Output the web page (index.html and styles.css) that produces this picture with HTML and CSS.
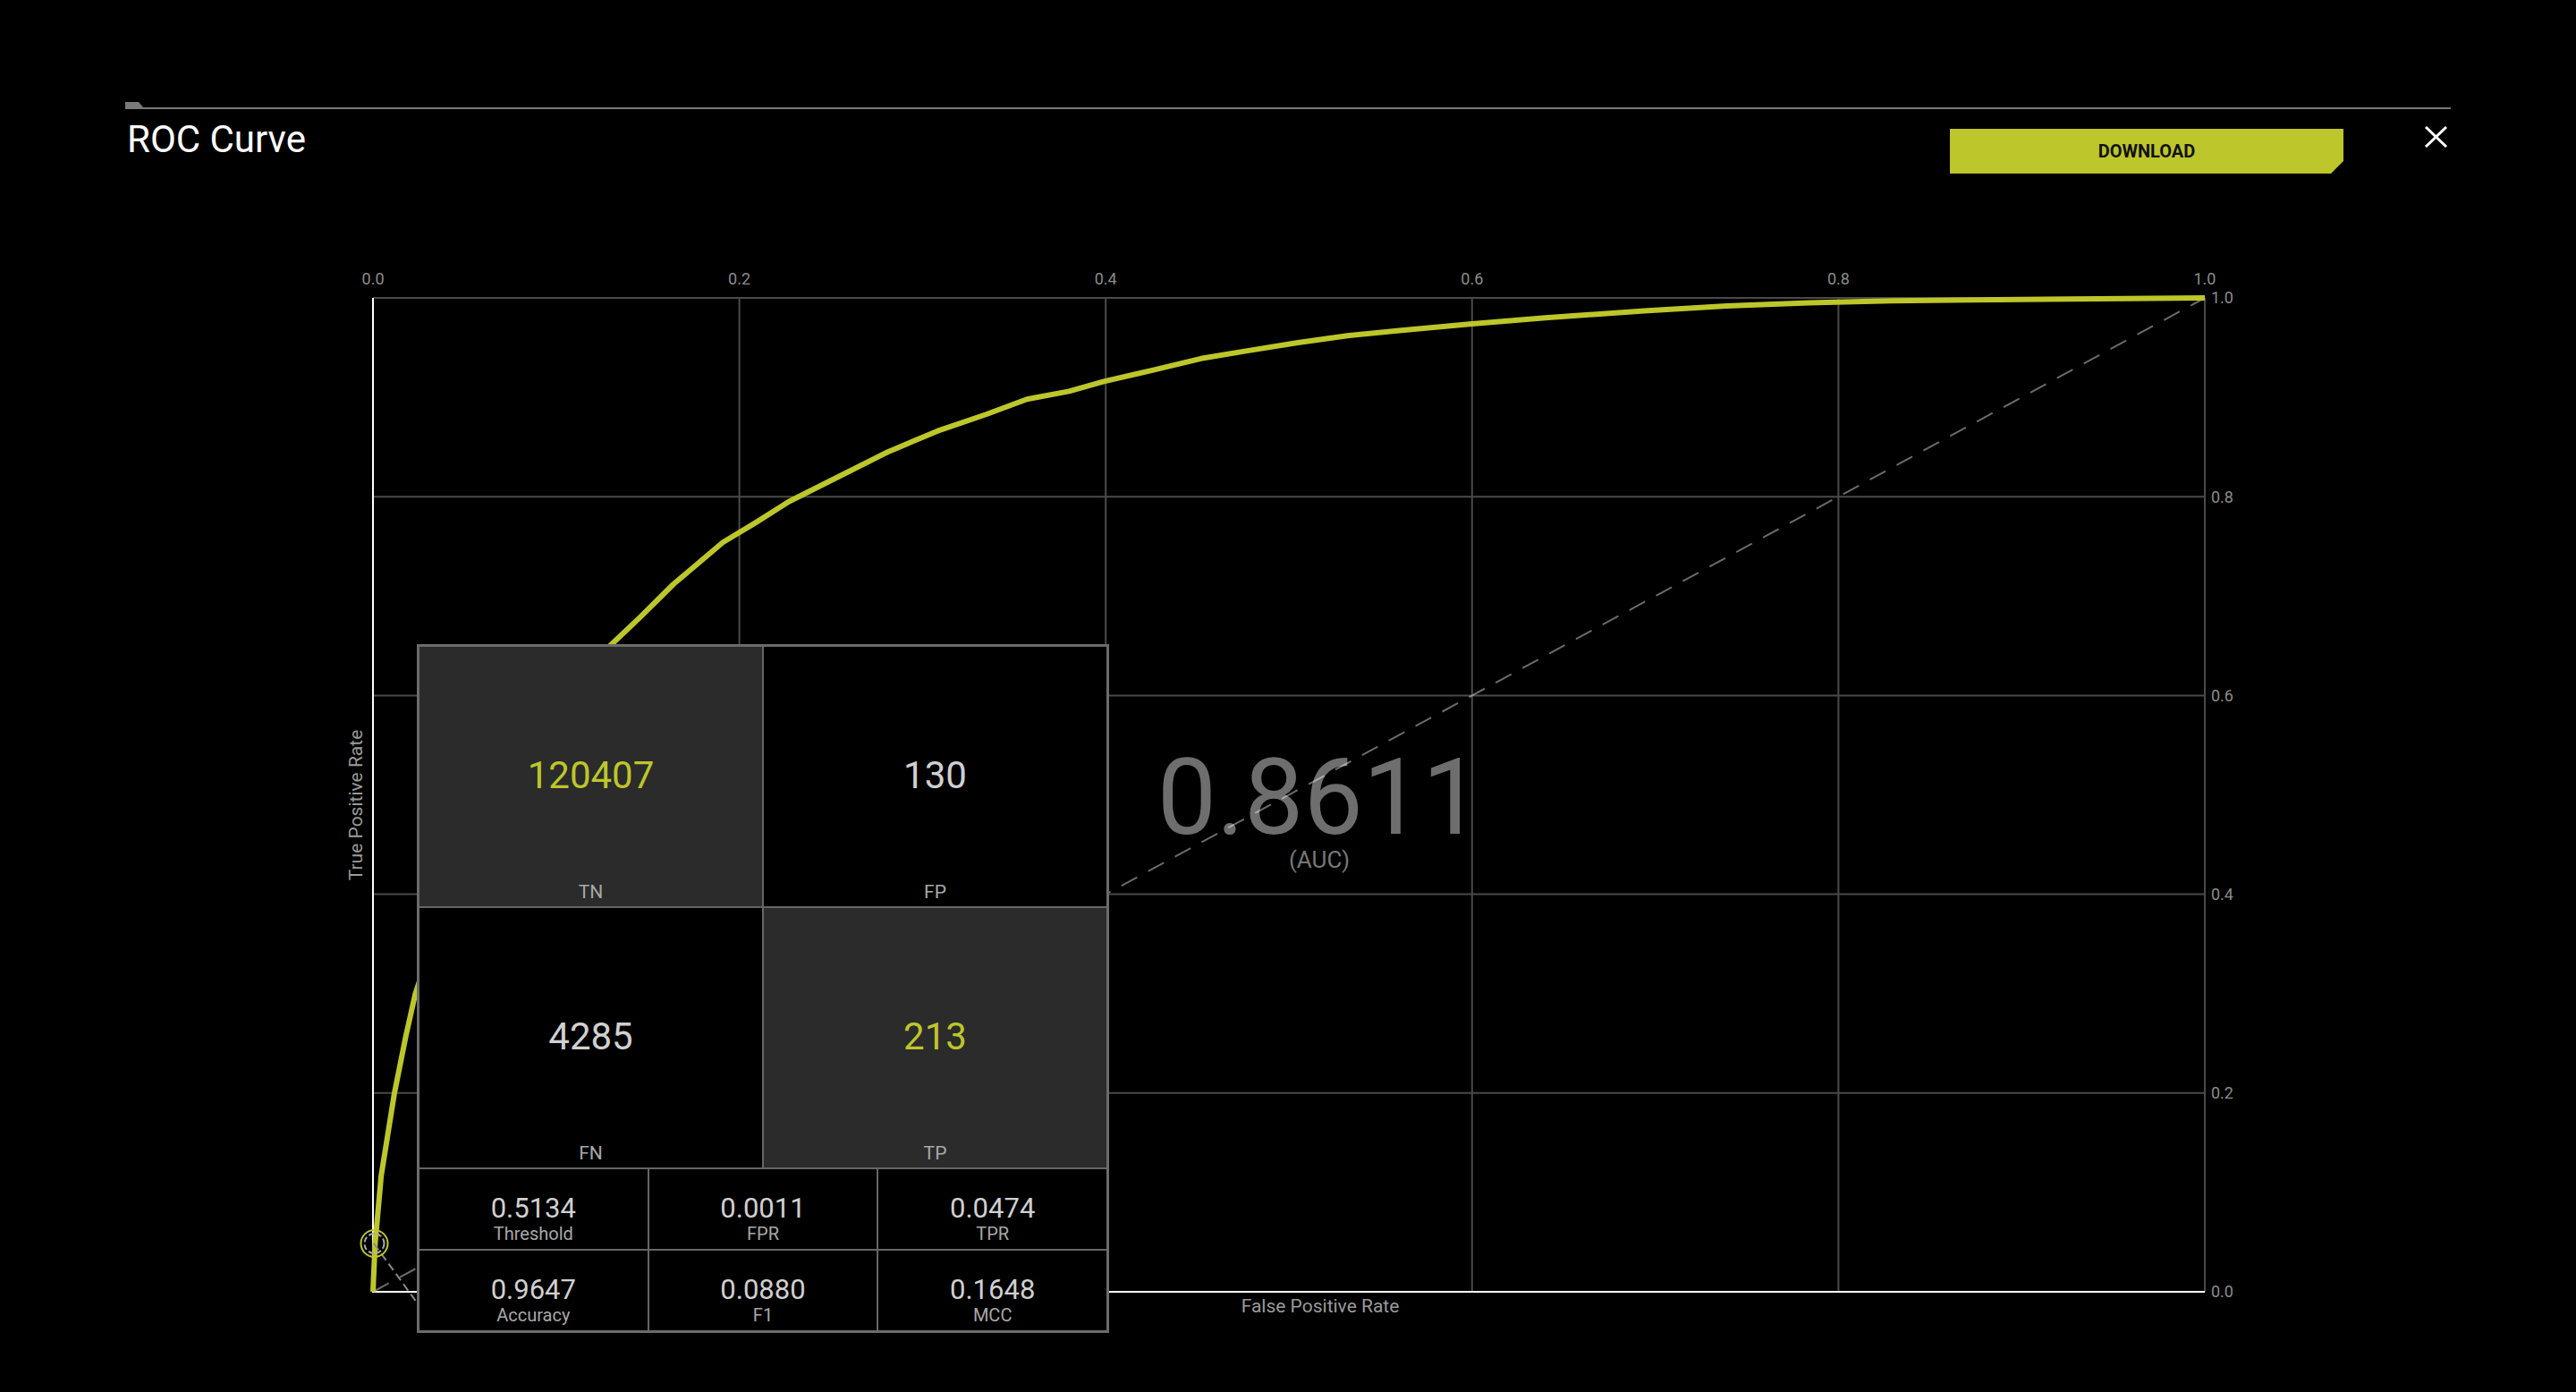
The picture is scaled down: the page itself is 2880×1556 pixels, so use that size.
FILE: index.html
```html
<!DOCTYPE html>
<html>
<head>
  <title>ROC Curve</title>
  <link rel="stylesheet" href="styles.css">
</head>
<body>
  <div class="modal">
    <div class="modal-bar"></div>
    <div class="modal-header">
      <h1 class="title">ROC Curve</h1>
      <div class="actions">
        <button class="download-btn">DOWNLOAD</button>
        <button class="close-btn" aria-label="Close">
          <svg width="27" height="24" viewBox="0 0 27 24">
            <line x1="2" y1="1" x2="25" y2="23" />
            <line x1="25" y1="1" x2="2" y2="23" />
          </svg>
        </button>
      </div>
    </div>

    <div class="chart">
      <svg class="chart-svg" width="2200" height="1220" viewBox="0 0 2200 1220">
        <g transform="translate(57,53)">
          <!-- grid -->
          <g class="grid">
            <line x1="0" y1="0" x2="2048" y2="0" />
            <line x1="0" y1="222.2" x2="2048" y2="222.2" />
            <line x1="0" y1="444.4" x2="2048" y2="444.4" />
            <line x1="0" y1="666.6" x2="2048" y2="666.6" />
            <line x1="0" y1="888.8" x2="2048" y2="888.8" />
            <line x1="409.6" y1="0" x2="409.6" y2="1111" />
            <line x1="819.2" y1="0" x2="819.2" y2="1111" />
            <line x1="1228.8" y1="0" x2="1228.8" y2="1111" />
            <line x1="1638.4" y1="0" x2="1638.4" y2="1111" />
            <line x1="2048" y1="0" x2="2048" y2="1111" />
          </g>

          <!-- ticks -->
          <g class="tick tick-x">
            <text x="0" y="-15">0.0</text>
            <text x="409.6" y="-15">0.2</text>
            <text x="819.2" y="-15">0.4</text>
            <text x="1228.8" y="-15">0.6</text>
            <text x="1638.4" y="-15">0.8</text>
            <text x="2048" y="-15">1.0</text>
          </g>
          <g class="tick tick-y">
            <text x="2055" y="0" dy="0.36em">1.0</text>
            <text x="2055" y="222.2" dy="0.36em">0.8</text>
            <text x="2055" y="444.4" dy="0.36em">0.6</text>
            <text x="2055" y="666.6" dy="0.36em">0.4</text>
            <text x="2055" y="888.8" dy="0.36em">0.2</text>
            <text x="2055" y="1111" dy="0.36em">0.0</text>
          </g>

          <text class="axis-title" transform="translate(-20,567) rotate(-90)" dy="0.36em">True Positive Rate</text>
          <text class="axis-title" x="1059" y="1134">False Positive Rate</text>

          <!-- auc -->
          <text class="auc-value" x="1058" y="599">0.8611</text>
          <text class="auc-label" x="1058" y="637">(AUC)</text>

          <!-- axes -->
          <line class="axis" x1="0" y1="0" x2="0" y2="1112" />
          <line class="axis" x1="0" y1="1111" x2="2048" y2="1111" />

          <line class="diagonal" x1="0" y1="1111" x2="2048" y2="0" />

          <path class="roc" d="M0,1111 L2.3,1058.3 L9.2,981 L24,888.8 L36.9,824.4 L47.1,778.8 L98.3,622.2 L170,494.4 L225.3,422.2 L266.2,387.7 L299,356.6 L335.9,320 L391.2,273.3 L428,251.1 L464.9,227.8 L520.2,200 L575.5,172.2 L630.8,148.9 L686.1,130 L731.1,113.3 L778.2,104.4 L817.2,93.3 L870.4,81.1 L925.7,67.8 L979,58.9 L1034.2,50 L1089.5,42.2 L1144.8,36.7 L1228.8,28.9 L1310.7,22.2 L1421.3,14.4 L1513.5,8.9 L1605.6,5.6 L1697.8,3.3 L1787.9,2.2 L2048,0" />

          <!-- selected threshold -->
          <line class="connector" x1="1" y1="1057" x2="60" y2="1138" />
          <circle class="marker" cx="1.5" cy="1057" r="15" />
          <circle class="marker-inner" cx="1.5" cy="1057" r="11" />
        </g>
      </svg>

      <div class="matrix">
        <div class="confusion">
          <div class="cell cell-hit">
            <div class="cell-value">120407</div>
            <div class="cell-label">TN</div>
          </div>
          <div class="cell">
            <div class="cell-value">130</div>
            <div class="cell-label">FP</div>
          </div>
          <div class="cell">
            <div class="cell-value">4285</div>
            <div class="cell-label">FN</div>
          </div>
          <div class="cell cell-hit">
            <div class="cell-value">213</div>
            <div class="cell-label">TP</div>
          </div>
        </div>
        <div class="stats">
          <div class="stat"><div class="stat-value">0.5134</div><div class="stat-label">Threshold</div></div>
          <div class="stat"><div class="stat-value">0.0011</div><div class="stat-label">FPR</div></div>
          <div class="stat"><div class="stat-value">0.0474</div><div class="stat-label">TPR</div></div>
          <div class="stat"><div class="stat-value">0.9647</div><div class="stat-label">Accuracy</div></div>
          <div class="stat"><div class="stat-value">0.0880</div><div class="stat-label">F1</div></div>
          <div class="stat"><div class="stat-value">0.1648</div><div class="stat-label">MCC</div></div>
        </div>
      </div>
    </div>
  </div>
</body>
</html>
```

FILE: styles.css
```css
body {
  margin: 0;
  background-color: #000;
  font-family: Roboto, 'Liberation Sans', sans-serif;
  color: #fff;
}
.modal {
  padding: 120px 140px 0;
}
.modal-bar {
  position: relative;
  height: 2px;
  background-color: #7a7a7a;
}
.modal-bar::before {
  content: '';
  position: absolute;
  left: 0;
  top: -6px;
  width: 20px;
  height: 6px;
  background-color: #7a7a7a;
  clip-path: polygon(0 0, 15px 0, 100% 100%, 0 100%);
}
.modal-header {
  display: flex;
  justify-content: space-between;
  align-items: flex-start;
}
.title {
  margin: 9px 0 0 2px;
  font-size: 42px;
  line-height: 50px;
  font-weight: 400;
  color: #fff;
}
.actions {
  display: flex;
  align-items: flex-start;
  gap: 90px;
  margin-top: 19px;
}
.download-btn {
  width: 440px;
  height: 50px;
  margin-top: 3px;
  border: none;
  background-color: #bdc62a;
  color: #111;
  font-family: Roboto, 'Liberation Sans', sans-serif;
  font-size: 20px;
  font-weight: 700;
  cursor: pointer;
  clip-path: polygon(0 0, 100% 0, 100% calc(100% - 14px), calc(100% - 14px) 100%, 0 100%);
}
.close-btn {
  padding: 0;
  margin-right: 3px;
  border: none;
  background: none;
  cursor: pointer;
}
.close-btn svg {
  display: block;
}
.close-btn line {
  stroke: #fff;
  stroke-width: 3;
}
.chart {
  position: relative;
  width: 2200px;
  height: 1220px;
  margin: 86px 0 0 220px;
}
.chart-svg {
  display: block;
  overflow: visible;
}
.grid line {
  stroke: #4a4a4a;
  stroke-width: 2;
}
.tick text {
  fill: #8c8c8c;
  font-size: 18px;
}
.tick-x text {
  text-anchor: middle;
}
.axis-title {
  fill: #9a9a9a;
  font-size: 21px;
  text-anchor: middle;
}
.auc-value {
  fill: #6e6e6e;
  font-size: 118px;
  text-anchor: middle;
}
.auc-label {
  fill: #777;
  font-size: 26px;
  text-anchor: middle;
}
.axis {
  stroke: #fff;
  stroke-width: 2;
}
.diagonal {
  stroke: rgba(255,255,255,0.42);
  stroke-width: 2;
  stroke-dasharray: 20 14;
}
.roc {
  fill: none;
  stroke: #bdc62a;
  stroke-width: 6;
  stroke-linejoin: round;
}
.connector {
  stroke: #8a8a8a;
  stroke-width: 2;
  stroke-dasharray: 9 5;
}
.marker {
  fill: none;
  stroke: #bdc62a;
  stroke-width: 2;
}
.marker-inner {
  fill: none;
  stroke: #aaa;
  stroke-width: 2;
  stroke-dasharray: 6 3;
}
.matrix {
  position: absolute;
  left: 106px;
  top: 440px;
  width: 768px;
  display: flex;
  flex-direction: column;
  gap: 2px;
  border: 3px solid #6b6b6b;
  background-color: #666;
}
.confusion {
  display: grid;
  grid-template-columns: 1fr 1fr;
  grid-auto-rows: 290px;
  gap: 2px;
}
.cell {
  display: grid;
  grid-template-rows: 1fr auto;
  justify-items: center;
  padding: 24px 0 5px;
  background-color: #000;
}
.cell-hit {
  background-color: #2b2b2b;
}
.cell-value {
  align-self: center;
  font-size: 42px;
  line-height: 42px;
  color: #d0d0d0;
}
.cell-hit .cell-value {
  color: #bdc62a;
}
.cell-label {
  font-size: 21px;
  line-height: 21px;
  color: #a8a8a8;
}
.stats {
  display: grid;
  grid-template-columns: 1fr 1fr 1fr;
  grid-auto-rows: 89px;
  gap: 2px;
}
.stat {
  display: flex;
  flex-direction: column;
  justify-content: flex-end;
  align-items: center;
  padding-bottom: 7px;
  background-color: #000;
}
.stat-value {
  margin-bottom: 3px;
  font-size: 31px;
  line-height: 31px;
  color: #d0d0d0;
}
.stat-label {
  font-size: 20px;
  line-height: 20px;
  color: #a8a8a8;
}
```
